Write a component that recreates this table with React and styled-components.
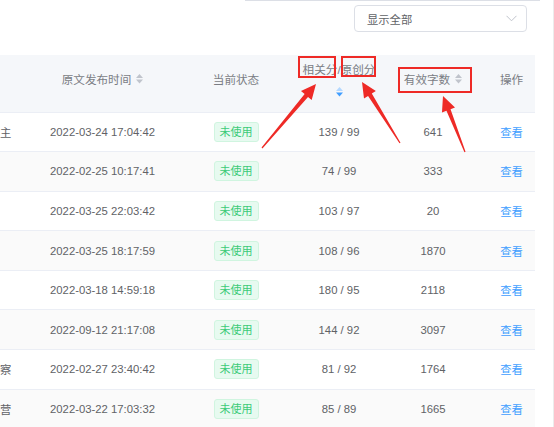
import React from 'react';
import styled, { createGlobalStyle } from 'styled-components';

const GlobalStyle = createGlobalStyle`
  html, body {
    margin: 0;
    padding: 0;
    background: #fff;
  }

  body {
    font-family: 'Liberation Sans', 'Noto Sans CJK SC', sans-serif;
    color: #606266;
  }
`;

const Page = styled.div`
  position: relative;
  width: 554px;
  height: 427px;
  overflow: hidden;
  border-right: 1px solid #ececec;
  box-sizing: border-box;
`;

const TopLine = styled.div`
  height: 1px;
  margin-left: 245px;
  width: 295px;
  background: #dcdfe6;
`;

const FilterBar = styled.div`
  display: flex;
  justify-content: flex-end;
  padding: 4px 26px 0 0;
  height: 54px;
  box-sizing: border-box;
`;

const Select = styled.div`
  width: 173px;
  height: 27px;
  box-sizing: border-box;
  border: 1px solid #dcdfe6;
  border-radius: 4px;
  display: flex;
  align-items: center;
  justify-content: space-between;
  padding: 0 9px 0 12px;
  font-size: 11.3px;
  color: #606266;
`;

const Table = styled.table`
  width: 535px;
  border-collapse: collapse;
  table-layout: fixed;
  font-size: 11.3px;
`;

const Head = styled.thead`
  background: #f5f7fa;
`;

const Th = styled.th`
  height: 57px;
  padding: 0 0 8px;
  box-sizing: border-box;
  font-weight: normal;
  color: #7a7d84;
  font-size: 11.6px;
  text-align: center;
  vertical-align: middle;
  border-bottom: 1px solid #ebeef5;
`;

const HeadInner = styled.div`
  display: flex;
  flex-direction: ${(p) => (p.$stacked ? 'column' : 'row')};
  align-items: center;
  justify-content: center;
  gap: ${(p) => (p.$stacked ? '10px' : '5px')};
  white-space: nowrap;
`;

const Row = styled.tr`
  background: ${(p) => (p.$striped ? '#fafafa' : '#fff')};
`;

const Td = styled.td`
  height: 38.6px;
  padding: 0;
  text-align: center;
  vertical-align: middle;
  color: #606266;
  border-bottom: 1px solid #ebeef5;
  white-space: nowrap;
  overflow: hidden;
`;

const CutCell = styled(Td)`
  text-align: left;
`;

const Tag = styled.span`
  display: inline-block;
  height: 20px;
  line-height: 18px;
  padding: 0 5px;
  box-sizing: border-box;
  font-size: 11px;
  color: #3ccb78;
  background: #e7faf0;
  border: 1px solid #d0f5e0;
  border-radius: 3px;
`;

const Link = styled.a`
  color: #409eff;
  font-size: 11.3px;
  text-decoration: none;
  cursor: pointer;
`;

const Overlay = styled.svg`
  position: absolute;
  left: 0;
  top: 0;
  pointer-events: none;
`;

function SortIcon({ active }) {
  return (
    <svg width='7' height='10' viewBox='0 0 7 10'>
      <polygon points='0,4 3.5,0 7,4' fill={active ? '#b3d8ff' : '#c0c4cc'} />
      <polygon points='0,5.6 7,5.6 3.5,9.6' fill={active ? '#409eff' : '#c0c4cc'} />
    </svg>
  );
}

function Chevron() {
  return (
    <svg width='11' height='7' viewBox='0 0 11 7'>
      <polyline points='0.5,0.8 5.5,5.8 10.5,0.8' fill='none' stroke='#c0c4cc' strokeWidth='1' />
    </svg>
  );
}

function arrowPoints(tail, tip) {
  const dx = tip[0] - tail[0];
  const dy = tip[1] - tail[1];
  const len = Math.hypot(dx, dy);
  const ux = dx / len;
  const uy = dy / len;
  const nx = -uy;
  const ny = ux;
  const hl = 15;
  const hw = 7;
  const bx = tip[0] - ux * hl;
  const by = tip[1] - uy * hl;
  const pts = [
    [tail[0] + nx * 0.6, tail[1] + ny * 0.6],
    [bx + nx * 2.2, by + ny * 2.2],
    [bx + nx * hw, by + ny * hw],
    tip,
    [bx - nx * hw, by - ny * hw],
    [bx - nx * 2.2, by - ny * 2.2],
    [tail[0] - nx * 0.6, tail[1] - ny * 0.6],
  ];
  return pts.map((p) => p.join(',')).join(' ');
}

const rows = [
  { lead: '主', time: '2022-03-24 17:04:42', score: '139 / 99', words: 641 },
  { lead: '', time: '2022-02-25 10:17:41', score: '74 / 99', words: 333 },
  { lead: '', time: '2022-03-25 22:03:42', score: '103 / 97', words: 20 },
  { lead: '', time: '2022-03-25 18:17:59', score: '108 / 96', words: 1870 },
  { lead: '', time: '2022-03-18 14:59:18', score: '180 / 95', words: 2118 },
  { lead: '', time: '2022-09-12 21:17:08', score: '144 / 92', words: 3097 },
  { lead: '察', time: '2022-02-27 23:40:42', score: '81 / 92', words: 1764 },
  { lead: '营', time: '2022-03-22 17:03:32', score: '85 / 89', words: 1665 },
];

const boxes = [
  { x: 299, y: 57, w: 36, h: 20 },
  { x: 342, y: 57, w: 33, h: 19 },
  { x: 399, y: 68, w: 72, h: 24 },
];

const arrows = [
  { tail: [262, 148], tip: [316, 84] },
  { tail: [400, 143], tip: [362, 82] },
  { tail: [465, 152], tip: [443, 96] },
];

export default function App() {
  return (
    <Page>
      <GlobalStyle />
      <TopLine />
      <FilterBar>
        <Select>
          <span>显示全部</span>
          <Chevron />
        </Select>
      </FilterBar>

      <Table>
        <colgroup>
          <col style={{ width: 33 }} />
          <col style={{ width: 139 }} />
          <col style={{ width: 128 }} />
          <col style={{ width: 78 }} />
          <col style={{ width: 110 }} />
          <col style={{ width: 47 }} />
        </colgroup>
        <Head>
          <tr>
            <Th />
            <Th>
              <HeadInner>
                原文发布时间
                <SortIcon />
              </HeadInner>
            </Th>
            <Th>
              <HeadInner>当前状态</HeadInner>
            </Th>
            <Th>
              <HeadInner $stacked>
                相关分/原创分
                <SortIcon active />
              </HeadInner>
            </Th>
            <Th>
              <HeadInner>
                有效字数
                <SortIcon />
              </HeadInner>
            </Th>
            <Th>
              <HeadInner>操作</HeadInner>
            </Th>
          </tr>
        </Head>
        <tbody>
          {rows.map((r, i) => (
            <Row key={r.time} $striped={i % 2 === 1}>
              <CutCell>{r.lead}</CutCell>
              <Td>{r.time}</Td>
              <Td>
                <Tag>未使用</Tag>
              </Td>
              <Td>{r.score}</Td>
              <Td>{r.words}</Td>
              <Td>
                <Link>查看</Link>
              </Td>
            </Row>
          ))}
        </tbody>
      </Table>

      <Overlay width='554' height='427'>
        {boxes.map((b) => (
          <rect
            key={b.x}
            x={b.x}
            y={b.y}
            width={b.w}
            height={b.h}
            fill='none'
            stroke='#ee2a26'
            strokeWidth='2'
          />
        ))}
        {arrows.map((a) => (
          <polygon key={a.tail[0]} points={arrowPoints(a.tail, a.tip)} fill='#ee2a26' />
        ))}
      </Overlay>
    </Page>
  );
}
